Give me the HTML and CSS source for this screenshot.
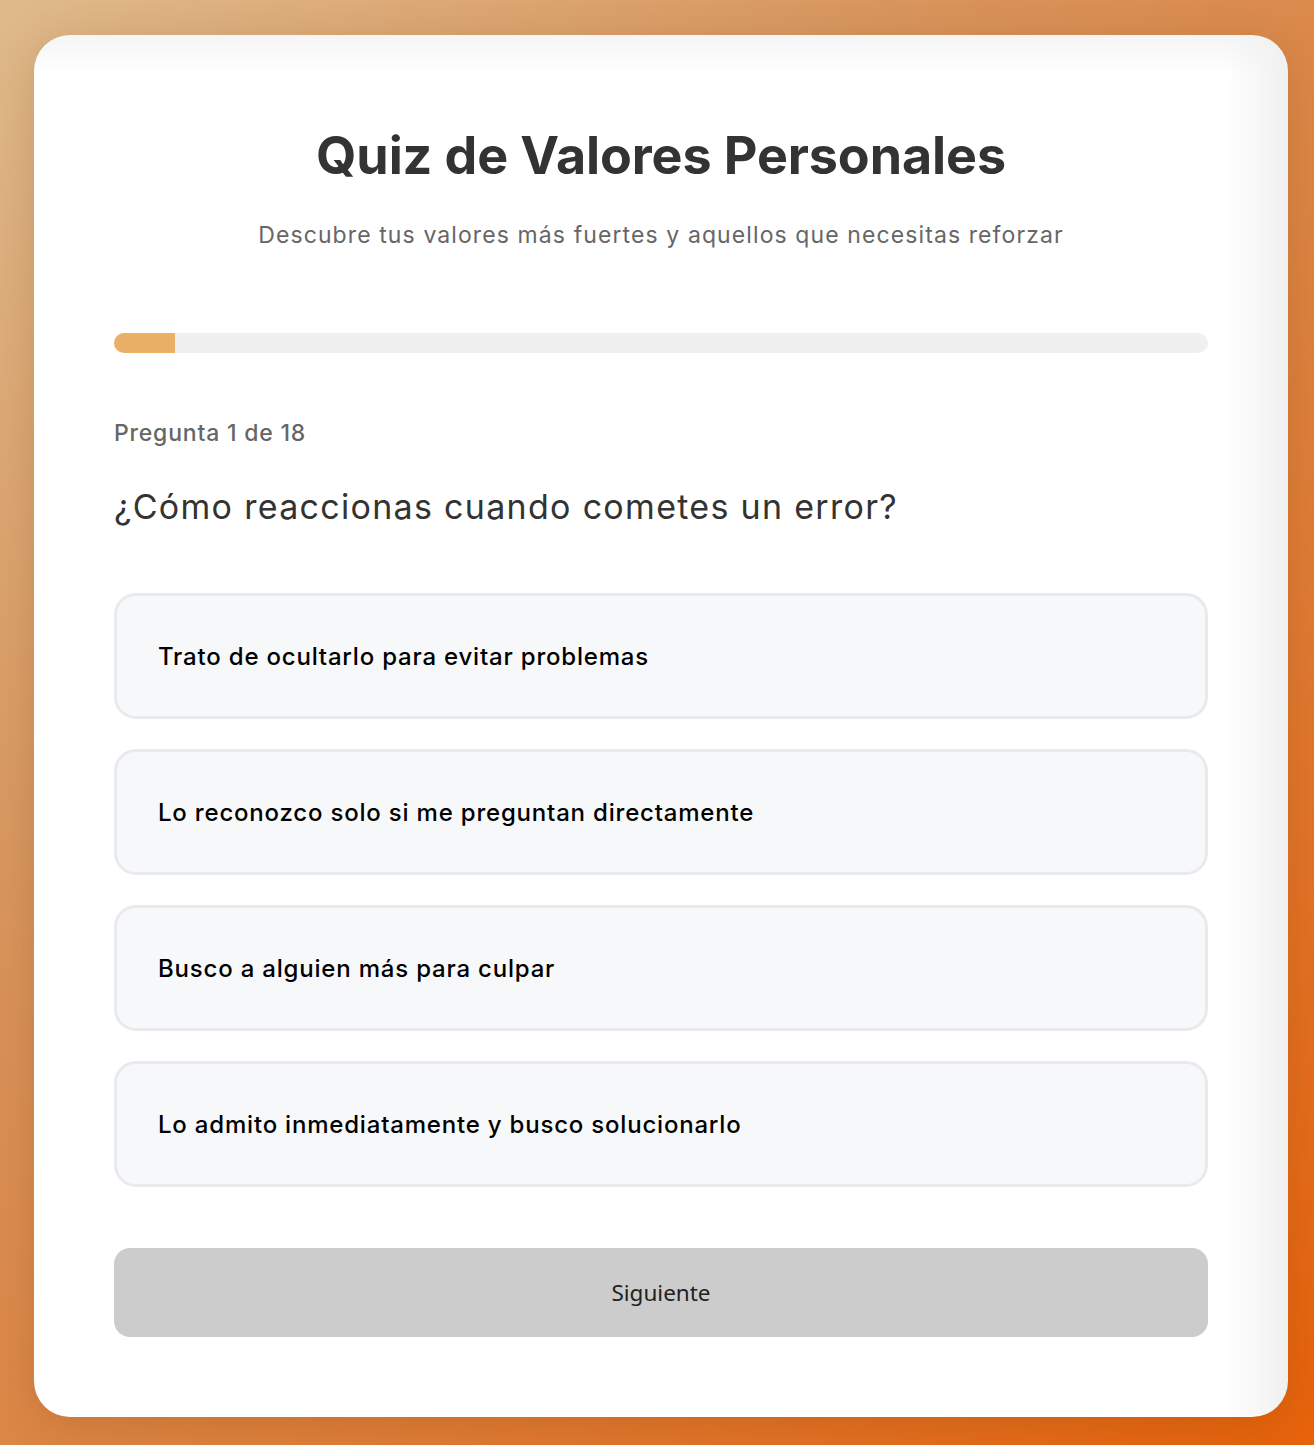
FILE: index.html
```html
<!DOCTYPE html>
<html lang="es">
<head>
<meta charset="utf-8">
<title>Quiz de Valores Personales</title>
<link rel="stylesheet" href="styles.css">
</head>
<body>
<main class="card">
  <h1 class="title">Quiz de Valores Personales</h1>
  <p class="subtitle">Descubre tus valores más fuertes y aquellos que necesitas reforzar</p>
  <div class="progress"><div class="progress-fill" style="width: 5.56%"></div></div>
  <p class="counter">Pregunta 1 de 18</p>
  <h2 class="question">¿Cómo reaccionas cuando cometes un error?</h2>
  <div class="options">
    <div class="option">Trato de ocultarlo para evitar problemas</div>
    <div class="option">Lo reconozco solo si me preguntan directamente</div>
    <div class="option">Busco a alguien más para culpar</div>
    <div class="option">Lo admito inmediatamente y busco solucionarlo</div>
  </div>
  <button class="next" type="button">Siguiente</button>
</main>
</body>
</html>
```
FILE: styles.css
```css
html, body {
  height: 100%;
}
body {
  margin: 0;
  padding: 35px 26px 28px 34px;
  box-sizing: border-box;
  background: linear-gradient(135deg, #dfba8b 0%, #d8935a 35%, #e07a32 70%, #e8620a 100%);
  font-family: "Inter", "Open Sans", sans-serif;
}
.card {
  box-sizing: border-box;
  height: 1382px;
  padding: 80px;
  border-radius: 36px;
  background:
    linear-gradient(to right, rgba(255,255,255,0) 95%, rgba(240,240,240,1) 100%),
    linear-gradient(to bottom, #f5f5f5 0px, #ffffff 40px);
  box-shadow: 0 8px 40px rgba(90, 50, 10, 0.18);
  display: flex;
  flex-direction: column;
}
.title {
  margin: 10px 0 0;
  text-align: center;
  font-size: 52px;
  line-height: 62px;
  font-weight: 700;
  color: #333;
  letter-spacing: -0.1px;
}
.subtitle {
  margin: 33px 0 0;
  text-align: center;
  font-size: 23px;
  line-height: 30px;
  color: #666;
  letter-spacing: 1.1px;
}
.progress {
  margin-top: 83px;
  height: 20px;
  border-radius: 10px;
  background: #f0f0f0;
  overflow: hidden;
}
.progress-fill {
  height: 100%;
  background: #ebb067;
}
.counter {
  margin: 65px 0 0;
  font-size: 23px;
  line-height: 30px;
  font-weight: 500;
  color: #666;
  letter-spacing: 0.8px;
}
.question {
  margin: 39px 0 0;
  font-size: 34px;
  line-height: 40px;
  font-weight: 400;
  color: #333;
  letter-spacing: 1.3px;
}
.options {
  margin-top: 66px;
  display: flex;
  flex-direction: column;
  gap: 30px;
}
.option {
  box-sizing: border-box;
  height: 126px;
  display: flex;
  align-items: center;
  padding: 0 41px;
  border: 3px solid #e8eaed;
  border-radius: 22px;
  background: #f7f8fa;
  font-size: 24px;
  font-weight: 500;
  color: #000;
  letter-spacing: 0.8px;
}
.next {
  margin-top: 61px;
  height: 89px;
  border: none;
  border-radius: 16px;
  background: #cccccc;
  font-family: "Noto Sans", "Open Sans", sans-serif;
  font-size: 22.5px;
  color: #222;
}
```
